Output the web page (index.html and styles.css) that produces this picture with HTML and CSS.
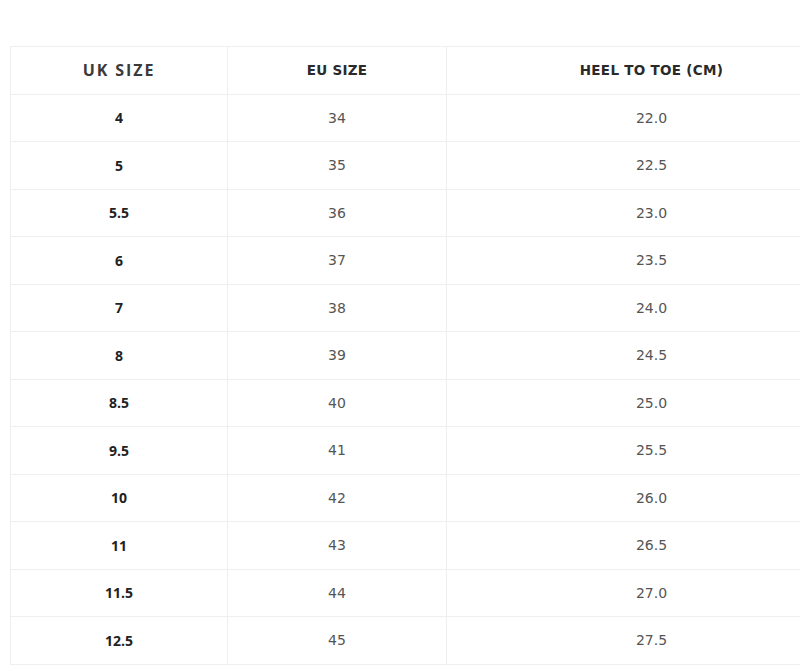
FILE: index.html
```html
<!DOCTYPE html>
<html lang="en">
<head>
<meta charset="utf-8">
<title>Size Chart</title>
<link rel="stylesheet" href="styles.css">
</head>
<body>
<div class="page">
  <table class="size-table">
    <colgroup>
      <col class="c1"><col class="c2"><col class="c3">
    </colgroup>
    <thead>
      <tr>
        <th class="uk-head">UK SIZE</th>
        <th>EU SIZE</th>
        <th>HEEL TO TOE (CM)</th>
      </tr>
    </thead>
    <tbody>
      <tr><td class="uk">4</td><td>34</td><td>22.0</td></tr>
      <tr><td class="uk">5</td><td>35</td><td>22.5</td></tr>
      <tr><td class="uk">5.5</td><td>36</td><td>23.0</td></tr>
      <tr><td class="uk">6</td><td>37</td><td>23.5</td></tr>
      <tr><td class="uk">7</td><td>38</td><td>24.0</td></tr>
      <tr><td class="uk">8</td><td>39</td><td>24.5</td></tr>
      <tr><td class="uk">8.5</td><td>40</td><td>25.0</td></tr>
      <tr><td class="uk">9.5</td><td>41</td><td>25.5</td></tr>
      <tr><td class="uk">10</td><td>42</td><td>26.0</td></tr>
      <tr><td class="uk">11</td><td>43</td><td>26.5</td></tr>
      <tr><td class="uk">11.5</td><td>44</td><td>27.0</td></tr>
      <tr><td class="uk">12.5</td><td>45</td><td>27.5</td></tr>
    </tbody>
  </table>
</div>
</body>
</html>
```
FILE: styles.css
```css
html, body {
  margin: 0;
  padding: 0;
  background: #ffffff;
  overflow: hidden;
}
body {
  font-family: "DejaVu Sans", "Open Sans", sans-serif;
}
.page {
  padding: 46px 0 0 10px;
  width: 860px;
}
.size-table {
  border-collapse: collapse;
  table-layout: fixed;
  width: 846px;
}
.c1 { width: 217px; }
.c2 { width: 219px; }
.c3 { width: 410px; }
.size-table th,
.size-table td {
  border: 1px solid #efefef;
  height: 46.5px;
  padding: 0;
  text-align: center;
  vertical-align: middle;
}
.size-table th {
  font-family: "DejaVu Sans", sans-serif;
  font-size: 13.5px;
  font-weight: 700;
  color: #2a2a2a;
  letter-spacing: 0.3px;
}
.size-table th.uk-head {
  font-family: "Open Sans", sans-serif;
  font-size: 16px;
  font-weight: 700;
  letter-spacing: 1.9px;
  color: #3a3a3a;
}
.size-table td {
  font-family: "DejaVu Sans", sans-serif;
  font-size: 14px;
  color: #555555;
  letter-spacing: 0;
}
.size-table td.uk {
  font-family: "Open Sans", sans-serif;
  font-weight: 700;
  font-size: 14px;
  color: #222222;
}
```
